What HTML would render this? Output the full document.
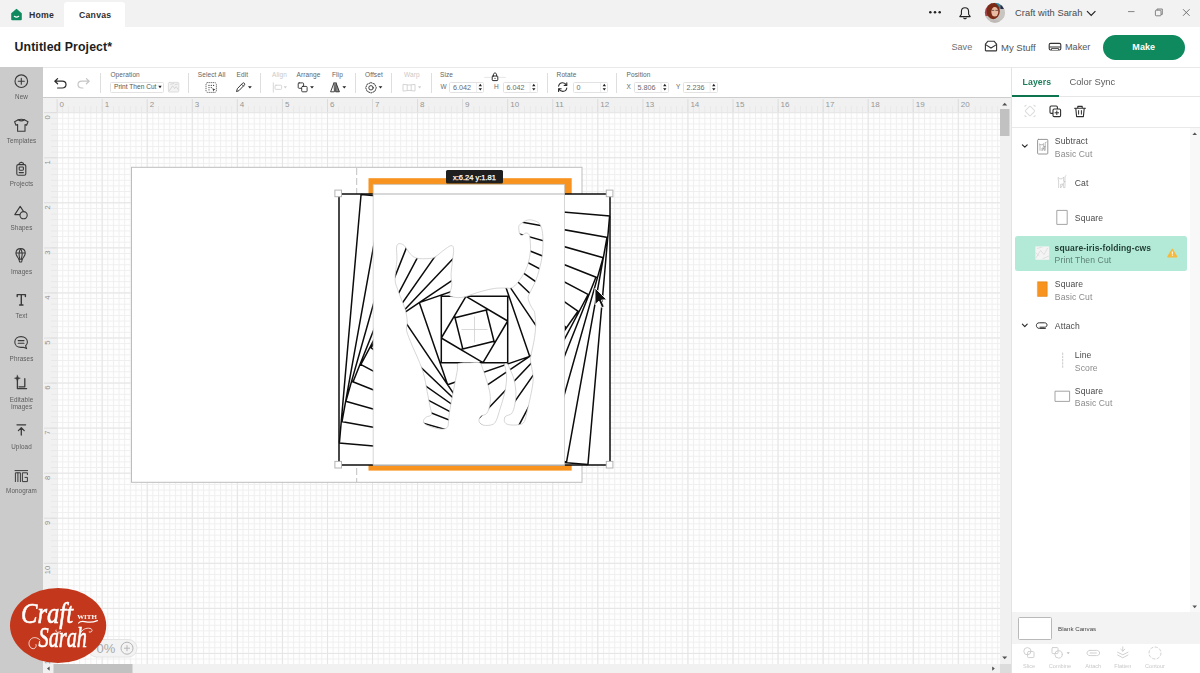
<!DOCTYPE html>
<html lang="en">
<head>
<meta charset="utf-8">
<title>Untitled Project* - Canvas</title>
<style>
*{box-sizing:border-box;margin:0;padding:0}
html,body{width:1200px;height:673px;overflow:hidden;background:#fff;font-family:"Liberation Sans",sans-serif;color:#333}
.abs{position:absolute}
#app{position:relative;width:1200px;height:673px;overflow:hidden;transform:translateZ(0)}
svg{display:block;overflow:visible}
.rl{font-family:"Liberation Sans",sans-serif;font-size:8px;fill:#969696}
/* title bar */
#titlebar{left:0;top:0;width:1200px;height:27px;background:#f2f2f2}
#tab-canvas{left:64px;top:2px;width:61px;height:26px;background:#fff;border-radius:3px 3px 0 0}
.t{position:absolute;white-space:nowrap;line-height:1}
.tabtxt{font-size:8.7px;font-weight:bold;color:#2f2f2f;letter-spacing:0.25px}
/* header */
#header{left:0;top:27px;width:1200px;height:40px;background:#fff}
#ptitle{left:14.5px;top:40.6px;font-size:12.3px;font-weight:bold;color:#1d1d1d;letter-spacing:0.12px}
.hlink{font-size:9.5px;color:#555}
#make{left:1102.5px;top:34.5px;width:82.5px;height:25px;border-radius:12.5px;background:#0f8a5f;color:#fff;font-size:9px;font-weight:bold;text-align:center;line-height:25px;letter-spacing:0.1px}
/* sidebar */
#sidebar{left:0;top:67px;width:43px;height:606px;background:#cbcbcb}
.sbl{position:absolute;left:0;width:43px;text-align:center;font-size:6.3px;color:#5c5c5c;line-height:7px;letter-spacing:0.1px}
/* toolbar */
#toolbar{left:43px;top:67px;width:968px;height:31px;background:#fff;border-top:1px solid #e9e9e9;border-bottom:1px solid #cdcdcd}
.tl{font-size:6.5px;color:#636363;letter-spacing:0.1px}
.tl.dim{color:#c9c9c9}
.sep{position:absolute;top:72.5px;width:1px;height:20.5px;background:#dedede}
.inp{position:absolute;top:82px;height:10.5px;border:1px solid #e2e2e2;border-radius:1.5px;background:#fff}
.iv{font-size:7.2px;color:#6a6a6a}
/* right panel */
#panel{left:1011px;top:67px;width:189px;height:606px;background:#fff}
.ln{font-size:8.6px;color:#4a4a4a;letter-spacing:0.12px;margin-top:0.8px}
.ls{font-size:8.6px;color:#8b8b8b;letter-spacing:0.1px;margin-top:0.8px}
.bl{font-size:5.6px;color:#c9c9c9}
</style>
</head>
<body>
<div id="app">
<!-- TITLEBAR -->
<div id="titlebar" class="abs"></div>
<div id="tab-canvas" class="abs"></div>
<svg class="abs" style="left:10px;top:8px" width="13" height="13" viewBox="0 0 13 13"><path d="M6.5 0.8L11.8 5.2V11.2Q11.8 12.2 10.8 12.2H2.2Q1.2 12.2 1.2 11.2V5.2Z" fill="#0f8a5f"/><path d="M4.3 8.3Q6.5 10 8.7 8.3" stroke="#fff" stroke-width="1.1" fill="none" stroke-linecap="round"/></svg>
<div class="t tabtxt" style="left:29px;top:10.9px">Home</div>
<div class="t tabtxt" style="left:79px;top:10.9px">Canvas</div>
<svg class="abs" style="left:925px;top:0" width="275" height="27" viewBox="925 0 275 27">
<circle cx="930.3" cy="12.3" r="1.25" fill="#222"/><circle cx="935" cy="12.3" r="1.25" fill="#222"/><circle cx="939.7" cy="12.3" r="1.25" fill="#222"/>
<path d="M965 7.7C967.6 7.7 968.6 9.6 968.6 11.6V14.2L970.2 16.6H959.8L961.4 14.2V11.6C961.4 9.6 962.4 7.7 965 7.7Z" fill="none" stroke="#222" stroke-width="1.1" stroke-linejoin="round"/><path d="M963.7 18.2Q965 19.4 966.3 18.2" stroke="#222" stroke-width="1.1" fill="none" stroke-linecap="round"/>
<circle cx="994.9" cy="12.7" r="10" fill="#c6c2be"/>
<clipPath id="avc"><circle cx="994.9" cy="12.7" r="10"/></clipPath>
<g clip-path="url(#avc)"><rect x="984" y="2" width="8" height="14" fill="#a4434c"/><rect x="996" y="2.5" width="4.6" height="6" fill="#2f8fa6"/><rect x="1000.4" y="4.6" width="3.4" height="4.4" fill="#2c2c48"/><rect x="1000" y="9" width="6" height="9" fill="#c9c5c1"/><ellipse cx="993.2" cy="11" rx="6.6" ry="8.2" fill="#7b2c17"/><ellipse cx="994.8" cy="11.8" rx="3.5" ry="4.8" fill="#e9bba3"/><path d="M984 25Q994 15 1006 25V27H984Z" fill="#bdb9b6"/><path d="M991.6 10.4H994.2M995.4 10.4H998" stroke="#5a3a34" stroke-width="0.8"/></g>
<path d="M1087 11.2L1091.2 15.4L1095.4 11.2" fill="none" stroke="#222" stroke-width="1.2"/>
<path d="M1128 11.6H1134.5" stroke="#777" stroke-width="0.9"/>
<rect x="1155.4" y="10.2" width="5.6" height="5.6" rx="0.8" fill="none" stroke="#777" stroke-width="0.9"/><path d="M1157 10.2V9H1162.3V14.4H1161" fill="none" stroke="#777" stroke-width="0.9"/>
<path d="M1183 9.2L1189.6 15.8M1189.6 9.2L1183 15.8" stroke="#666" stroke-width="0.9"/>
</svg>
<div class="t" style="left:1015px;top:8.5px;font-size:9.3px;color:#4a4a4a;letter-spacing:0.05px">Craft with Sarah</div>
<!-- HEADER -->
<div id="header" class="abs"></div>
<div id="ptitle" class="t">Untitled Project*</div>
<div class="t hlink" style="left:951.5px;top:42.7px;font-size:9.1px;color:#6f6f6f">Save</div>
<svg class="abs" style="left:984px;top:40px" width="14" height="12" viewBox="0 0 14 12"><path d="M1.4 4.2L4 1.2H10L12.6 4.2V10.2Q12.6 10.9 11.9 10.9H2.1Q1.4 10.9 1.4 10.2Z" fill="none" stroke="#333" stroke-width="1.1" stroke-linejoin="round"/><path d="M1.6 4.6L7 8L12.4 4.6" fill="none" stroke="#333" stroke-width="1.1"/></svg>
<div class="t hlink" style="left:1001px;top:42.5px">My Stuff</div>
<svg class="abs" style="left:1048px;top:42px" width="14" height="10" viewBox="0 0 14 10"><rect x="1.2" y="1.4" width="11.6" height="6.6" rx="1.4" fill="none" stroke="#333" stroke-width="1.1"/><path d="M1.4 5H12.6" stroke="#333" stroke-width="1"/><path d="M3.4 8V6.6H10.6V8" fill="#fff" stroke="#333" stroke-width="0.9"/></svg>
<div class="t hlink" style="left:1065px;top:42.7px;font-size:9.1px">Maker</div>
<div id="make" class="abs">Make</div>

<!-- SIDEBAR -->
<div id="sidebar" class="abs"></div>
<svg class="abs" style="left:0;top:67px" width="43" height="440" viewBox="0 67 43 440" fill="none" stroke="#3a3a3a" stroke-width="1.1" stroke-linecap="round" stroke-linejoin="round">
<!-- New -->
<circle cx="21.3" cy="81.2" r="6.3"/><path d="M18.3 81.2H24.3M21.3 78.2V84.2"/>
<!-- Templates (shirt) -->
<path d="M18.2 119.8Q21.3 122 24.4 119.8L28 121.8L26.6 125.2L25 124.6V131.2H17.6V124.6L16 125.2L14.6 121.8Z"/><path d="M18.2 119.8Q21.3 118.6 24.4 119.8"/>
<!-- Projects -->
<rect x="16.8" y="164.6" width="9" height="10.6" rx="1.5"/><path d="M19.2 164.4V163.2L21.3 162.2L23.4 163.2V164.4"/><rect x="19.2" y="167" width="4.2" height="3.2" rx="0.6"/><path d="M19.2 172.6H23.4"/>
<!-- Shapes -->
<path d="M20.2 206.4L25.6 214.6H14.8Z"/><circle cx="23.6" cy="215.2" r="3.6" fill="#cbcbcb"/>
<!-- Images (balloon) -->
<path d="M20.6 248.6C23.6 248.6 25.2 250.8 25.2 253.2C25.2 255.8 23 257.4 22.4 259.2H18.8C18.2 257.4 16 255.8 16 253.2C16 250.8 17.6 248.6 20.6 248.6Z"/><path d="M20.6 248.8C19 251 19 256 19.8 259M20.6 248.8C22.2 251 22.2 256 21.4 259M16.2 253H25"/><path d="M19 259.4L19.6 262H21.6L22.2 259.4"/>
<!-- Text -->
<path d="M17.2 296.6V294.6H25.4V296.6M21.3 294.8V304.8M19.6 305H23" stroke-width="1.4"/>
<!-- Phrases -->
<path d="M21 336.6C24.8 336.6 27.4 339 27.4 342C27.4 343.6 26.6 345 25.6 345.8L26.6 348.6L23.4 347.2C22.6 347.4 21.8 347.4 21 347.4C17.2 347.4 14.8 345 14.8 342C14.8 339 17.2 336.6 21 336.6Z"/><path d="M18.2 340.6H24M18.2 343.2H24"/>
<!-- Editable images -->
<path d="M17.4 379.4V388.6H26.6M19 386.8H24.8V378.6" stroke-width="1.3"/><path d="M17.4 375.2L18.3 377.4L20.4 378.2L18.3 379L17.4 381.2L16.5 379L14.4 378.2L16.5 377.4Z" fill="#3a3a3a" stroke-width="0.4"/>
<!-- Upload -->
<path d="M17 424.8H25.6" stroke-width="1.3"/><path d="M21.3 435V428M18.4 430.6L21.3 427.6L24.2 430.6" stroke-width="1.3"/>
<!-- Monogram -->
<path d="M15 470.6H27.6" stroke-width="1"/><path d="M15.4 481.6V472.8H20.4V481.6M17.9 472.8V481.6" stroke-width="1"/><path d="M27.4 474.6V472.8H22.4V481.6H27.4V477.4H25" stroke-width="1"/>
</svg>
<div class="sbl" style="top:92.8px">New</div>
<div class="sbl" style="top:136.5px">Templates</div>
<div class="sbl" style="top:180.2px">Projects</div>
<div class="sbl" style="top:224.2px">Shapes</div>
<div class="sbl" style="top:267.8px">Images</div>
<div class="sbl" style="top:311.5px">Text</div>
<div class="sbl" style="top:354.8px">Phrases</div>
<div class="sbl" style="top:396.2px">Editable<br>Images</div>
<div class="sbl" style="top:442.8px;line-height:7px">Upload</div>
<div class="sbl" style="top:486.8px">Monogram</div>

<!-- TOOLBAR -->
<div id="toolbar" class="abs"></div>
<svg class="abs" style="left:43px;top:68px" width="968" height="29" viewBox="43 68 968 29" fill="none" stroke-linecap="round" stroke-linejoin="round">
<!-- undo / redo -->
<path d="M57.6 78.6L54.8 81.2L57.6 83.8M55 81.2H62.2C64.6 81.2 66 82.8 66 84.6C66 86.4 64.6 88 62.2 88H57.6" stroke="#2b2b2b" stroke-width="1.2"/>
<path d="M86.4 78.6L89.2 81.2L86.4 83.8M89 81.2H81.8C79.4 81.2 78 82.8 78 84.6C78 86.4 79.4 88 81.8 88H83" stroke="#c6c6c6" stroke-width="1.2"/>
<!-- op swatch -->
<rect x="168.4" y="82.4" width="10.4" height="9.6" rx="1" stroke="#d5d5d5" stroke-width="0.8" fill="#f3f3f3"/><path d="M169.4 90.6L172.6 85.8L174.6 88.6L176.2 86.6L178 89.4M170.6 84.2L173.8 83.6M175 84.8L177.6 84" stroke="#cfcfcf" stroke-width="0.8"/>
<!-- select all -->
<rect x="206" y="82.6" width="10.4" height="9.8" rx="1.8" stroke="#3a3a3a" stroke-width="0.95" stroke-dasharray="0.2 1.75" stroke-linecap="round"/><g fill="#3a3a3a" stroke="none"><circle cx="209" cy="85.4" r="0.6"/><circle cx="211.3" cy="85.4" r="0.6"/><circle cx="213.6" cy="85.4" r="0.6"/><circle cx="209" cy="87.6" r="0.6"/><circle cx="211.3" cy="87.6" r="0.6"/><circle cx="209" cy="89.8" r="0.6"/><path d="M212.4 88.2L215.4 89.6L213.9 90.2L213.4 91.8Z"/></g>
<!-- edit pencil -->
<path d="M236.6 91.2L237.4 88.6L242.6 83.2Q243.5 82.4 244.4 83.3Q245.2 84.2 244.4 85L239.2 90.4Z" stroke="#2b2b2b" stroke-width="0.95"/><path d="M241.6 84.3L243.4 86.1" stroke="#2b2b2b" stroke-width="0.8"/><path d="M248 86.2H251.8L249.9 88.6Z" fill="#222" stroke="none"/>
<!-- align (disabled) -->
<path d="M273.3 82.8V92.2" stroke="#d2d2d2" stroke-width="0.9"/><rect x="275" y="85.2" width="6.6" height="4.2" rx="0.9" stroke="#d2d2d2" stroke-width="0.9"/><path d="M283.6 86.2H287L285.3 88.4Z" fill="#d0d0d0" stroke="none"/>
<!-- arrange -->
<rect x="298.2" y="82.9" width="5.4" height="5.4" rx="0.9" stroke="#2b2b2b" stroke-width="0.9"/><rect x="301.7" y="86.4" width="5.4" height="5.4" rx="0.9" stroke="#2b2b2b" stroke-width="0.9" fill="#fff"/><path d="M310.1 86.2H313.9L312 88.6Z" fill="#222" stroke="none"/>
<!-- flip -->
<path d="M334 82.8L330.6 91.8H334Z" stroke="#2b2b2b" stroke-width="0.9"/><path d="M336 82.8L339.4 91.8H336Z" stroke="#2b2b2b" stroke-width="0.9" fill="#8a8a8a"/><path d="M342.4 86.2H346.2L344.3 88.6Z" fill="#222" stroke="none"/>
<!-- offset -->
<circle cx="371" cy="87.8" r="2.2" stroke="#2b2b2b" stroke-width="0.9"/><path d="M371 82.6L374.8 84.2L376.3 87.8L374.8 91.4L371 93L367.2 91.4L365.7 87.8L367.2 84.2Z" stroke="#2b2b2b" stroke-width="0.9" stroke-dasharray="1.3 1.2"/><path d="M378.6 86.2H382.4L380.5 88.6Z" fill="#222" stroke="none"/>
<!-- warp (disabled) -->
<path d="M403.4 84.4Q409.2 85.8 415 84.4V91Q409.2 89.8 403.4 91ZM407.2 85V90.2M411.2 85V90.2" stroke="#cfcfcf" stroke-width="0.9"/><path d="M417.9 86.2H421.3L419.6 88.4Z" fill="#d0d0d0" stroke="none"/>
<!-- lock -->
<path d="M484.6 77.4H490.4M499.4 77.4H505.4" stroke="#e0e0e0" stroke-width="0.8"/>
<rect x="492.2" y="76" width="5.6" height="4.6" rx="0.8" stroke="#2b2b2b" stroke-width="1" fill="#fff"/><path d="M493.4 76V74.8C493.4 73.6 494.2 73 495 73C495.8 73 496.6 73.6 496.6 74.8V76" stroke="#2b2b2b" stroke-width="1"/><circle cx="495" cy="78.3" r="0.6" fill="#2b2b2b" stroke="none"/>
<!-- rotate icon -->
<path d="M558.6 86.2C559 84 560.6 82.8 562.6 82.8C564.4 82.8 565.8 83.8 566.4 85.2M566.8 88C566.4 90.2 564.8 91.4 562.8 91.4C561 91.4 559.6 90.4 559 89" stroke="#2b2b2b" stroke-width="1.1"/><path d="M566.8 82.8V85.4H564.2M558.6 91.4V88.8H561.2" stroke="#2b2b2b" stroke-width="1.1"/>
</svg>
<div class="sep" style="left:100px"></div><div class="sep" style="left:188px"></div><div class="sep" style="left:260.4px"></div><div class="sep" style="left:355px"></div><div class="sep" style="left:391px"></div><div class="sep" style="left:430.5px"></div><div class="sep" style="left:546.5px"></div><div class="sep" style="left:616px"></div>
<div class="t tl" style="left:110.4px;top:72.2px">Operation</div>
<div class="inp" style="left:110.4px;width:53.6px"></div>
<div class="t" style="left:114px;top:84px;font-size:6.6px;color:#555">Print Then Cut</div>
<svg class="abs" style="left:157.6px;top:85.4px" width="4" height="4" viewBox="0 0 4 4"><path d="M0.3 0.8H3.7L2 3.2Z" fill="#222"/></svg>
<div class="t tl" style="left:197.8px;top:72.2px">Select All</div>
<div class="t tl" style="left:236.6px;top:72.2px">Edit</div>
<div class="t tl dim" style="left:272px;top:72.2px">Align</div>
<div class="t tl" style="left:296.6px;top:72.2px">Arrange</div>
<div class="t tl" style="left:332px;top:72.2px">Flip</div>
<div class="t tl" style="left:365px;top:72.2px">Offset</div>
<div class="t tl dim" style="left:404px;top:72.2px">Warp</div>
<div class="t tl" style="left:440px;top:72.2px">Size</div>
<div class="t tl" style="left:440.6px;top:84px;color:#6a6a6a">W</div>
<div class="inp" style="left:449px;width:35px"></div><div class="t iv" style="left:453px;top:83.8px">6.042</div>
<div class="t tl" style="left:494px;top:84px;color:#6a6a6a">H</div>
<div class="inp" style="left:502.5px;width:35px"></div><div class="t iv" style="left:506.5px;top:83.8px">6.042</div>
<div class="t tl" style="left:556.6px;top:72.2px">Rotate</div>
<div class="inp" style="left:573px;width:35px"></div><div class="t iv" style="left:576.4px;top:83.8px">0</div>
<div class="t tl" style="left:626.6px;top:72.2px">Position</div>
<div class="t tl" style="left:626.6px;top:84px;color:#6a6a6a">X</div>
<div class="inp" style="left:633.5px;width:35px"></div><div class="t iv" style="left:637.6px;top:83.8px">5.806</div>
<div class="t tl" style="left:676px;top:84px;color:#6a6a6a">Y</div>
<div class="inp" style="left:682.5px;width:35px"></div><div class="t iv" style="left:686.6px;top:83.8px">2.236</div>
<svg class="abs" style="left:43px;top:68px" width="968" height="29" viewBox="43 68 968 29">
<g fill="#222">
<path id="spn" d="M478.6 86.2H482L480.3 83.8ZM478.6 88.2H482L480.3 90.6Z"/>
<path d="M478.6 86.2H482L480.3 83.8ZM478.6 88.2H482L480.3 90.6Z" transform="translate(53.5 0)"/>
<path d="M478.6 86.2H482L480.3 83.8ZM478.6 88.2H482L480.3 90.6Z" transform="translate(124 0)"/>
<path d="M478.6 86.2H482L480.3 83.8ZM478.6 88.2H482L480.3 90.6Z" transform="translate(184.5 0)"/>
<path d="M478.6 86.2H482L480.3 83.8ZM478.6 88.2H482L480.3 90.6Z" transform="translate(233.5 0)"/>
</g>
<g stroke="#e2e2e2" stroke-width="0.7"><path d="M476.6 82.6V92M530.1 82.6V92M600.6 82.6V92M661.1 82.6V92M710.1 82.6V92"/></g>
</svg>

<svg id="csvg" class="abs" style="left:0;top:0" width="1200" height="673" viewBox="0 0 1200 673">
<defs>
<pattern id="gmin" x="56.60" y="112.20" width="5.6325" height="5.6325" patternUnits="userSpaceOnUse">
<path d="M0.5 0V5.633 M0 0.5H5.633" stroke="#efefef" stroke-width="1" fill="none"/></pattern>
<pattern id="gmaj" x="56.60" y="112.20" width="45.060" height="45.060" patternUnits="userSpaceOnUse">
<path d="M0.5 0V45.060 M0 0.5H45.060" stroke="#e5e5e5" stroke-width="1" fill="none"/></pattern>
<pattern id="gq" x="56.60" y="112.20" width="11.2650" height="11.2650" patternUnits="userSpaceOnUse">
<path d="M0.5 0V11.265 M0 0.5H11.265" stroke="#eeeeee" stroke-width="1" fill="none"/></pattern>
<pattern id="rtick" x="56.60" y="0" width="5.6325" height="6" patternUnits="userSpaceOnUse"><path d="M0.5 0V6" stroke="#e8e8e8" stroke-width="1"/></pattern>
<pattern id="ltick" x="0" y="112.20" width="6" height="5.6325" patternUnits="userSpaceOnUse"><path d="M0 0.5H6" stroke="#e8e8e8" stroke-width="1"/></pattern>
<clipPath id="cv"><rect x="43" y="98" width="957" height="566"/></clipPath>
<clipPath id="catclip"><path d="M399.1 243.7C397.8 243.9 397.0 244.4 396.6 247.1C396.2 249.8 397.1 254.4 396.9 259.7C396.6 265.0 395.0 274.1 395.1 279.0C395.2 283.9 396.3 285.4 397.6 289.4C398.9 293.4 401.4 299.1 402.8 302.8C404.2 306.5 405.1 308.5 405.8 311.7C406.6 314.9 407.2 318.8 407.3 322.0C407.4 325.2 405.8 326.9 406.6 330.7C407.4 334.5 410.0 340.2 411.9 345.0C413.8 349.8 416.3 354.4 418.2 359.2C420.1 363.9 422.0 368.1 423.5 373.5C425.0 378.9 426.1 386.0 427.1 391.3C428.2 396.6 429.1 401.6 429.8 405.5C430.5 409.4 432.1 412.6 431.5 414.5C430.9 416.4 427.5 416.1 426.2 417.1C424.9 418.1 423.6 419.5 423.5 420.7C423.4 421.9 423.5 423.1 425.3 424.3C427.1 425.5 431.2 427.0 434.2 427.8C437.2 428.6 440.9 429.2 443.1 429.1C445.3 429.0 446.7 428.1 447.6 426.9C448.5 425.6 448.2 424.0 448.5 421.6C448.8 419.2 448.8 416.6 449.4 412.7C450.0 408.8 451.1 403.1 452.0 398.4C452.9 393.6 453.8 388.9 454.7 384.2C455.6 379.4 456.8 373.3 457.4 369.9C458.0 366.5 456.2 364.9 458.3 363.7C460.4 362.5 466.3 362.9 469.9 362.8C473.4 362.7 477.5 361.8 479.6 362.8C481.7 363.8 481.5 365.6 482.7 368.6C483.9 371.7 485.6 376.9 486.8 381.1C488.0 385.3 489.5 389.8 490.0 393.6C490.5 397.4 490.5 400.7 490.0 404.0C489.5 407.3 488.4 411.2 486.8 413.3C485.2 415.4 481.9 415.0 480.6 416.4C479.3 417.8 478.6 420.1 479.1 421.6C479.6 423.1 481.6 424.7 483.7 425.2C485.8 425.7 489.9 425.5 492.0 424.7C494.1 423.9 494.8 423.4 496.2 420.6C497.6 417.8 498.9 412.6 500.3 408.1C501.7 403.6 503.4 398.5 504.5 393.6C505.6 388.8 506.4 383.2 506.6 379.0C506.8 374.8 505.9 371.0 505.5 368.6C505.1 366.2 504.1 365.2 504.5 364.4C504.9 363.6 506.7 363.3 507.6 364.0C508.5 364.7 508.6 366.1 509.7 368.6C510.8 371.1 512.9 375.2 513.9 379.0C514.9 382.8 515.7 387.3 515.9 391.5C516.1 395.7 515.6 400.4 514.9 404.0C514.2 407.6 513.4 411.2 511.8 413.3C510.2 415.4 506.7 415.0 505.5 416.4C504.3 417.8 504.0 420.2 504.5 421.6C505.0 423.0 506.3 424.2 508.7 424.7C511.1 425.2 516.5 425.2 519.1 424.7C521.7 424.2 522.9 424.0 524.3 421.6C525.7 419.2 526.3 414.9 527.4 410.2C528.5 405.5 530.1 398.8 531.1 393.6C532.1 388.4 533.1 383.5 533.2 379.0C533.3 374.5 532.0 370.0 531.5 366.5C531.0 363.0 530.3 361.3 530.5 358.2C530.7 355.1 531.9 351.3 532.6 347.8C533.3 344.3 534.1 341.2 534.6 337.4C535.1 333.6 535.7 329.1 535.7 325.0C535.7 320.9 535.0 315.0 534.6 312.5C534.2 310.0 534.0 311.2 533.3 310.0C532.6 308.8 531.3 307.1 530.4 305.0C529.5 302.9 528.1 299.8 528.1 297.6C528.1 295.4 529.2 294.4 530.4 291.7C531.6 289.0 534.0 285.0 535.5 281.3C537.0 277.6 538.2 273.6 539.3 269.4C540.4 265.2 541.6 260.4 542.2 256.0C542.8 251.6 543.0 246.9 543.0 242.7C543.0 238.5 542.8 234.0 542.2 230.8C541.6 227.6 540.8 225.1 539.3 223.4C537.8 221.7 535.3 221.0 533.3 220.4C531.3 219.8 529.4 219.6 527.4 220.1C525.4 220.6 522.8 222.4 521.4 223.4C520.0 224.4 519.1 224.6 518.8 226.3C518.5 228.0 519.1 232.3 519.7 233.8C520.3 235.3 521.2 235.3 522.2 235.2C523.2 235.1 524.8 233.1 525.9 233.0C527.0 232.9 528.2 233.4 528.9 234.5C529.6 235.6 529.9 236.8 530.1 239.7C530.4 242.5 530.7 247.6 530.4 251.6C530.1 255.6 529.2 259.8 528.1 263.5C527.0 267.2 525.7 270.4 523.7 273.9C521.7 277.4 518.3 281.9 516.2 284.3C514.1 286.7 512.9 287.4 511.0 288.0C509.1 288.6 507.8 287.9 505.1 288.0C502.4 288.1 498.4 287.9 494.7 288.4C491.0 288.9 486.8 289.9 482.8 291.0C478.9 292.1 473.9 293.7 471.0 294.7C468.1 295.7 467.4 296.3 465.2 296.8C463.0 297.3 460.3 297.7 457.8 297.6C455.3 297.5 451.6 296.9 450.3 296.1C449.0 295.4 449.8 295.0 450.0 293.1C450.2 291.2 451.6 288.1 451.8 285.0C452.0 281.9 451.0 278.8 451.1 274.6C451.2 270.4 452.2 263.9 452.6 259.7C453.0 255.5 453.9 251.7 453.6 249.3C453.4 247.0 452.9 245.3 451.1 245.6C449.3 245.8 445.5 249.0 442.9 250.8C440.3 252.7 437.7 255.4 435.5 256.7C433.3 258.0 432.7 258.2 429.6 258.5C426.5 258.8 420.1 259.0 416.9 258.2C413.7 257.4 412.3 255.9 410.2 253.8C408.1 251.7 406.1 247.3 404.3 245.6C402.5 243.9 400.4 243.4 399.1 243.7Z"/></clipPath>
</defs>
<g clip-path="url(#cv)">
<rect x="43" y="98" width="957" height="566" fill="#fefefe"/>
<rect x="57" y="112" width="943" height="552" fill="url(#gmin)"/>
<rect x="57" y="112" width="943" height="552" fill="url(#gmaj)"/>
<!-- rulers -->
<rect x="43" y="98" width="957" height="14" fill="#f1f1f1"/>
<rect x="43" y="98" width="14" height="566" fill="#f1f1f1"/>
<rect x="57" y="106" width="943" height="6" fill="url(#rtick)"/>
<rect x="51" y="112" width="6" height="552" fill="url(#ltick)"/>
<line x1="57.1" y1="99" x2="57.1" y2="112" stroke="#dcdcdc" stroke-width="1"/>
<text x="59.6" y="107" class="rl">0</text>
<line x1="102.2" y1="99" x2="102.2" y2="112" stroke="#dcdcdc" stroke-width="1"/>
<text x="104.7" y="107" class="rl">1</text>
<line x1="147.2" y1="99" x2="147.2" y2="112" stroke="#dcdcdc" stroke-width="1"/>
<text x="149.7" y="107" class="rl">2</text>
<line x1="192.3" y1="99" x2="192.3" y2="112" stroke="#dcdcdc" stroke-width="1"/>
<text x="194.8" y="107" class="rl">3</text>
<line x1="237.3" y1="99" x2="237.3" y2="112" stroke="#dcdcdc" stroke-width="1"/>
<text x="239.8" y="107" class="rl">4</text>
<line x1="282.4" y1="99" x2="282.4" y2="112" stroke="#dcdcdc" stroke-width="1"/>
<text x="284.9" y="107" class="rl">5</text>
<line x1="327.5" y1="99" x2="327.5" y2="112" stroke="#dcdcdc" stroke-width="1"/>
<text x="330.0" y="107" class="rl">6</text>
<line x1="372.5" y1="99" x2="372.5" y2="112" stroke="#dcdcdc" stroke-width="1"/>
<text x="375.0" y="107" class="rl">7</text>
<line x1="417.6" y1="99" x2="417.6" y2="112" stroke="#dcdcdc" stroke-width="1"/>
<text x="420.1" y="107" class="rl">8</text>
<line x1="462.6" y1="99" x2="462.6" y2="112" stroke="#dcdcdc" stroke-width="1"/>
<text x="465.1" y="107" class="rl">9</text>
<line x1="507.7" y1="99" x2="507.7" y2="112" stroke="#dcdcdc" stroke-width="1"/>
<text x="510.2" y="107" class="rl">10</text>
<line x1="552.8" y1="99" x2="552.8" y2="112" stroke="#dcdcdc" stroke-width="1"/>
<text x="555.3" y="107" class="rl">11</text>
<line x1="597.8" y1="99" x2="597.8" y2="112" stroke="#dcdcdc" stroke-width="1"/>
<text x="600.3" y="107" class="rl">12</text>
<line x1="642.9" y1="99" x2="642.9" y2="112" stroke="#dcdcdc" stroke-width="1"/>
<text x="645.4" y="107" class="rl">13</text>
<line x1="687.9" y1="99" x2="687.9" y2="112" stroke="#dcdcdc" stroke-width="1"/>
<text x="690.4" y="107" class="rl">14</text>
<line x1="733.0" y1="99" x2="733.0" y2="112" stroke="#dcdcdc" stroke-width="1"/>
<text x="735.5" y="107" class="rl">15</text>
<line x1="778.1" y1="99" x2="778.1" y2="112" stroke="#dcdcdc" stroke-width="1"/>
<text x="780.6" y="107" class="rl">16</text>
<line x1="823.1" y1="99" x2="823.1" y2="112" stroke="#dcdcdc" stroke-width="1"/>
<text x="825.6" y="107" class="rl">17</text>
<line x1="868.2" y1="99" x2="868.2" y2="112" stroke="#dcdcdc" stroke-width="1"/>
<text x="870.7" y="107" class="rl">18</text>
<line x1="913.2" y1="99" x2="913.2" y2="112" stroke="#dcdcdc" stroke-width="1"/>
<text x="915.7" y="107" class="rl">19</text>
<line x1="958.3" y1="99" x2="958.3" y2="112" stroke="#dcdcdc" stroke-width="1"/>
<text x="960.8" y="107" class="rl">20</text>
<line x1="44" y1="112.7" x2="57" y2="112.7" stroke="#dcdcdc" stroke-width="1"/>
<text transform="translate(50.4 115.2) rotate(-90)" class="rl" style="font-size:7.6px;fill:#8f8f8f" text-anchor="end">0</text>
<line x1="44" y1="157.8" x2="57" y2="157.8" stroke="#dcdcdc" stroke-width="1"/>
<text transform="translate(50.4 160.3) rotate(-90)" class="rl" style="font-size:7.6px;fill:#8f8f8f" text-anchor="end">1</text>
<line x1="44" y1="202.8" x2="57" y2="202.8" stroke="#dcdcdc" stroke-width="1"/>
<text transform="translate(50.4 205.3) rotate(-90)" class="rl" style="font-size:7.6px;fill:#8f8f8f" text-anchor="end">2</text>
<line x1="44" y1="247.9" x2="57" y2="247.9" stroke="#dcdcdc" stroke-width="1"/>
<text transform="translate(50.4 250.4) rotate(-90)" class="rl" style="font-size:7.6px;fill:#8f8f8f" text-anchor="end">3</text>
<line x1="44" y1="292.9" x2="57" y2="292.9" stroke="#dcdcdc" stroke-width="1"/>
<text transform="translate(50.4 295.4) rotate(-90)" class="rl" style="font-size:7.6px;fill:#8f8f8f" text-anchor="end">4</text>
<line x1="44" y1="338.0" x2="57" y2="338.0" stroke="#dcdcdc" stroke-width="1"/>
<text transform="translate(50.4 340.5) rotate(-90)" class="rl" style="font-size:7.6px;fill:#8f8f8f" text-anchor="end">5</text>
<line x1="44" y1="383.1" x2="57" y2="383.1" stroke="#dcdcdc" stroke-width="1"/>
<text transform="translate(50.4 385.6) rotate(-90)" class="rl" style="font-size:7.6px;fill:#8f8f8f" text-anchor="end">6</text>
<line x1="44" y1="428.1" x2="57" y2="428.1" stroke="#dcdcdc" stroke-width="1"/>
<text transform="translate(50.4 430.6) rotate(-90)" class="rl" style="font-size:7.6px;fill:#8f8f8f" text-anchor="end">7</text>
<line x1="44" y1="473.2" x2="57" y2="473.2" stroke="#dcdcdc" stroke-width="1"/>
<text transform="translate(50.4 475.7) rotate(-90)" class="rl" style="font-size:7.6px;fill:#8f8f8f" text-anchor="end">8</text>
<line x1="44" y1="518.2" x2="57" y2="518.2" stroke="#dcdcdc" stroke-width="1"/>
<text transform="translate(50.4 520.7) rotate(-90)" class="rl" style="font-size:7.6px;fill:#8f8f8f" text-anchor="end">9</text>
<line x1="44" y1="563.3" x2="57" y2="563.3" stroke="#dcdcdc" stroke-width="1"/>
<text transform="translate(50.4 565.8) rotate(-90)" class="rl" style="font-size:7.6px;fill:#8f8f8f" text-anchor="end">10</text>
<line x1="44" y1="608.4" x2="57" y2="608.4" stroke="#dcdcdc" stroke-width="1"/>
<text transform="translate(50.4 610.9) rotate(-90)" class="rl" style="font-size:7.6px;fill:#8f8f8f" text-anchor="end">11</text>
<line x1="44" y1="653.4" x2="57" y2="653.4" stroke="#dcdcdc" stroke-width="1"/>
<text transform="translate(50.4 655.9) rotate(-90)" class="rl" style="font-size:7.6px;fill:#8f8f8f" text-anchor="end">12</text>
<!-- mat / card -->
<rect x="131.5" y="167.3" width="450.5" height="315" fill="#fff" stroke="#bdbdbd" stroke-width="1"/>
<line x1="356.7" y1="168" x2="356.7" y2="482" stroke="#b0b0b0" stroke-width="0.8" stroke-dasharray="7 3"/>
<!-- orange square -->
<rect x="368.5" y="178.2" width="203.2" height="292.4" fill="#f7931e"/>
<!-- iris folding print -->
<rect x="339" y="194" width="271" height="271" fill="#fff"/>
<g fill="none" stroke="#0c0c0c" stroke-width="1.5" stroke-linejoin="miter">
<polygon points="339.0,194.0 610.0,194.0 610.0,465.0 339.0,465.0"/>
<path d="M361.1 194.4L610.0 216.1M609.6 216.1L587.9 465.0M587.9 464.6L339.0 442.9M339.4 442.9L361.1 194.0M382.4 197.0L607.8 237.6M607.0 237.4L566.4 462.8M566.6 462.0L341.2 421.4M342.0 421.6L382.6 196.2M402.6 200.9L603.3 257.7M603.1 257.6L546.3 458.3M546.4 458.1L345.7 401.3M345.9 401.4L402.7 200.7M422.2 208.1L597.4 277.8M595.9 277.2L526.2 452.4M526.8 450.9L351.6 381.2M353.1 381.8L422.8 206.6M439.5 215.9L588.9 294.9M588.1 294.5L509.1 443.9M509.5 443.1L360.1 364.1M360.9 364.5L439.9 215.1M456.2 226.0L578.9 311.9M578.0 311.2L492.1 433.9M492.8 433.0L370.1 347.1M371.0 347.8L456.9 225.1M472.1 238.5L566.3 327.9M565.5 327.1L476.1 421.3M476.9 420.5L382.7 331.1M383.5 331.9L472.9 237.7M488.8 255.7L548.8 344.6M548.3 343.8L459.4 403.8M460.2 403.3L400.2 314.4M400.7 315.2L489.6 255.2M501.4 274.3L529.7 356.4M529.7 356.4L447.6 384.7M447.6 384.7L419.3 302.6M419.3 302.6L501.4 274.3M507.7 296.3L507.7 364.0M507.7 362.7L440.0 362.7M441.3 362.7L441.3 295.0M441.3 296.3L509.0 296.3M507.7 321.0L483.0 362.7M483.0 362.7L441.3 338.0M441.3 338.0L466.0 296.3M466.0 296.3L507.7 321.0M494.0 341.2L460.7 349.5M462.8 349.0L454.5 315.7M455.0 317.8L488.3 309.5M486.2 310.0L494.5 343.3"/>
</g>
<path d="M461.5 329.5H487.5M474.5 316.5V342.5" stroke="#cfcfcf" stroke-width="0.8" fill="none"/>
<!-- subtract layer (white with cat hole) -->
<path fill-rule="evenodd" fill="#fff" stroke="#c4c4c4" stroke-width="0.7" d="M373.2 184.4H564.5V465.4H373.2Z M399.1 243.7C397.8 243.9 397.0 244.4 396.6 247.1C396.2 249.8 397.1 254.4 396.9 259.7C396.6 265.0 395.0 274.1 395.1 279.0C395.2 283.9 396.3 285.4 397.6 289.4C398.9 293.4 401.4 299.1 402.8 302.8C404.2 306.5 405.1 308.5 405.8 311.7C406.6 314.9 407.2 318.8 407.3 322.0C407.4 325.2 405.8 326.9 406.6 330.7C407.4 334.5 410.0 340.2 411.9 345.0C413.8 349.8 416.3 354.4 418.2 359.2C420.1 363.9 422.0 368.1 423.5 373.5C425.0 378.9 426.1 386.0 427.1 391.3C428.2 396.6 429.1 401.6 429.8 405.5C430.5 409.4 432.1 412.6 431.5 414.5C430.9 416.4 427.5 416.1 426.2 417.1C424.9 418.1 423.6 419.5 423.5 420.7C423.4 421.9 423.5 423.1 425.3 424.3C427.1 425.5 431.2 427.0 434.2 427.8C437.2 428.6 440.9 429.2 443.1 429.1C445.3 429.0 446.7 428.1 447.6 426.9C448.5 425.6 448.2 424.0 448.5 421.6C448.8 419.2 448.8 416.6 449.4 412.7C450.0 408.8 451.1 403.1 452.0 398.4C452.9 393.6 453.8 388.9 454.7 384.2C455.6 379.4 456.8 373.3 457.4 369.9C458.0 366.5 456.2 364.9 458.3 363.7C460.4 362.5 466.3 362.9 469.9 362.8C473.4 362.7 477.5 361.8 479.6 362.8C481.7 363.8 481.5 365.6 482.7 368.6C483.9 371.7 485.6 376.9 486.8 381.1C488.0 385.3 489.5 389.8 490.0 393.6C490.5 397.4 490.5 400.7 490.0 404.0C489.5 407.3 488.4 411.2 486.8 413.3C485.2 415.4 481.9 415.0 480.6 416.4C479.3 417.8 478.6 420.1 479.1 421.6C479.6 423.1 481.6 424.7 483.7 425.2C485.8 425.7 489.9 425.5 492.0 424.7C494.1 423.9 494.8 423.4 496.2 420.6C497.6 417.8 498.9 412.6 500.3 408.1C501.7 403.6 503.4 398.5 504.5 393.6C505.6 388.8 506.4 383.2 506.6 379.0C506.8 374.8 505.9 371.0 505.5 368.6C505.1 366.2 504.1 365.2 504.5 364.4C504.9 363.6 506.7 363.3 507.6 364.0C508.5 364.7 508.6 366.1 509.7 368.6C510.8 371.1 512.9 375.2 513.9 379.0C514.9 382.8 515.7 387.3 515.9 391.5C516.1 395.7 515.6 400.4 514.9 404.0C514.2 407.6 513.4 411.2 511.8 413.3C510.2 415.4 506.7 415.0 505.5 416.4C504.3 417.8 504.0 420.2 504.5 421.6C505.0 423.0 506.3 424.2 508.7 424.7C511.1 425.2 516.5 425.2 519.1 424.7C521.7 424.2 522.9 424.0 524.3 421.6C525.7 419.2 526.3 414.9 527.4 410.2C528.5 405.5 530.1 398.8 531.1 393.6C532.1 388.4 533.1 383.5 533.2 379.0C533.3 374.5 532.0 370.0 531.5 366.5C531.0 363.0 530.3 361.3 530.5 358.2C530.7 355.1 531.9 351.3 532.6 347.8C533.3 344.3 534.1 341.2 534.6 337.4C535.1 333.6 535.7 329.1 535.7 325.0C535.7 320.9 535.0 315.0 534.6 312.5C534.2 310.0 534.0 311.2 533.3 310.0C532.6 308.8 531.3 307.1 530.4 305.0C529.5 302.9 528.1 299.8 528.1 297.6C528.1 295.4 529.2 294.4 530.4 291.7C531.6 289.0 534.0 285.0 535.5 281.3C537.0 277.6 538.2 273.6 539.3 269.4C540.4 265.2 541.6 260.4 542.2 256.0C542.8 251.6 543.0 246.9 543.0 242.7C543.0 238.5 542.8 234.0 542.2 230.8C541.6 227.6 540.8 225.1 539.3 223.4C537.8 221.7 535.3 221.0 533.3 220.4C531.3 219.8 529.4 219.6 527.4 220.1C525.4 220.6 522.8 222.4 521.4 223.4C520.0 224.4 519.1 224.6 518.8 226.3C518.5 228.0 519.1 232.3 519.7 233.8C520.3 235.3 521.2 235.3 522.2 235.2C523.2 235.1 524.8 233.1 525.9 233.0C527.0 232.9 528.2 233.4 528.9 234.5C529.6 235.6 529.9 236.8 530.1 239.7C530.4 242.5 530.7 247.6 530.4 251.6C530.1 255.6 529.2 259.8 528.1 263.5C527.0 267.2 525.7 270.4 523.7 273.9C521.7 277.4 518.3 281.9 516.2 284.3C514.1 286.7 512.9 287.4 511.0 288.0C509.1 288.6 507.8 287.9 505.1 288.0C502.4 288.1 498.4 287.9 494.7 288.4C491.0 288.9 486.8 289.9 482.8 291.0C478.9 292.1 473.9 293.7 471.0 294.7C468.1 295.7 467.4 296.3 465.2 296.8C463.0 297.3 460.3 297.7 457.8 297.6C455.3 297.5 451.6 296.9 450.3 296.1C449.0 295.4 449.8 295.0 450.0 293.1C450.2 291.2 451.6 288.1 451.8 285.0C452.0 281.9 451.0 278.8 451.1 274.6C451.2 270.4 452.2 263.9 452.6 259.7C453.0 255.5 453.9 251.7 453.6 249.3C453.4 247.0 452.9 245.3 451.1 245.6C449.3 245.8 445.5 249.0 442.9 250.8C440.3 252.7 437.7 255.4 435.5 256.7C433.3 258.0 432.7 258.2 429.6 258.5C426.5 258.8 420.1 259.0 416.9 258.2C413.7 257.4 412.3 255.9 410.2 253.8C408.1 251.7 406.1 247.3 404.3 245.6C402.5 243.9 400.4 243.4 399.1 243.7Z"/>
<!-- selection box -->
<path d="M373.2 194H564.5M373.2 465H564.5" fill="none" stroke="#a8a8a8" stroke-width="0.9"/>
<g fill="#fff" stroke="#b4b4b4" stroke-width="1">
<rect x="334.9" y="190.1" width="6.6" height="6.6"/><rect x="606.3" y="190.1" width="6.6" height="6.6"/>
<rect x="334.9" y="461.4" width="6.6" height="6.6"/><rect x="606.3" y="461.4" width="6.6" height="6.6"/>
</g>
<!-- tooltip -->
<rect x="446" y="170" width="57" height="13.5" rx="1.5" fill="#1f1f1f"/>
<text x="474.5" y="179.6" text-anchor="middle" font-size="7.5" fill="#fff" stroke="#fff" stroke-width="0.25" font-family="Liberation Sans, sans-serif">x:6.24 y:1.81</text>
<!-- cursor -->
<path transform="translate(0.5 2.5)" d="M594.5 285.5L594.5 302.2L598.4 298.6L601.3 305.2L603.8 304.1L600.9 297.6L606.3 297.3Z" fill="#111" stroke="#fff" stroke-width="0.9" stroke-linejoin="round"/>
<!-- zoom pill -->
<rect x="88" y="639.5" width="49" height="17.5" rx="8.7" fill="#f3f3f3" stroke="#e4e4e4" stroke-width="1"/>
<text x="96.5" y="653" font-size="13" fill="#a9a9a9" font-family="Liberation Sans, sans-serif">0%</text>
<circle cx="127" cy="648.2" r="6" fill="none" stroke="#b5b5b5" stroke-width="1"/>
<path d="M124 648.2H130M127 645.2V651.2" stroke="#b5b5b5" stroke-width="1" fill="none"/>
</g>
<!-- scrollbars -->
<rect x="43" y="664" width="968" height="9" fill="#f1f1f1"/>
<rect x="53.5" y="664" width="79" height="9" fill="#c1c1c1"/>
<path d="M49.6 666.4L47 668.6L49.6 670.8Z" fill="#505050"/>
<path d="M992.2 666.4L994.8 668.6L992.2 670.8Z" fill="#505050"/>
<rect x="1000" y="98" width="11" height="566" fill="#f1f1f1"/>
<rect x="1000" y="109" width="9.5" height="27" fill="#c1c1c1"/>
<path d="M1002.2 105.5L1004.7 102.8L1007.2 105.5Z" fill="#505050"/>
<path d="M1002.2 656.5L1004.7 659.2L1007.2 656.5Z" fill="#505050"/>
<rect x="1000" y="664" width="11" height="9" fill="#dcdcdc"/>
</svg>
<!-- PANEL -->
<div id="panel" class="abs"></div>
<div class="abs" style="left:1011px;top:67px;width:189px;height:1px;background:#e9e9e9"></div>
<div class="abs" style="left:1011px;top:67px;width:1px;height:606px;background:#e3e3e3"></div>
<div class="t" style="left:1022.6px;top:77.2px;font-size:8.7px;font-weight:bold;color:#1a7f5a;letter-spacing:0.1px;margin-top:0.4px">Layers</div>
<div class="t" style="left:1069.4px;top:77.2px;font-size:9.4px;color:#5e5e5e">Color Sync</div>
<div class="abs" style="left:1012px;top:96px;width:188px;height:1px;background:#e6e6e6"></div>
<div class="abs" style="left:1012px;top:94.8px;width:47.4px;height:1.8px;background:#0e7450"></div>
<div class="abs" style="left:1012px;top:126.6px;width:188px;height:1px;background:#e9e9e9"></div>
<!-- selected row -->
<div class="abs" style="left:1014.6px;top:236.2px;width:172px;height:34.8px;background:#b3ead7;border-radius:2.5px"></div>
<!-- blank canvas strip -->
<div class="abs" style="left:1190px;top:127.6px;width:10px;height:484px;background:#f8f8f8"></div>
<div class="abs" style="left:1012px;top:611.6px;width:188px;height:32px;background:#f3f3f3"></div>
<div class="abs" style="left:1018.4px;top:616.6px;width:33.4px;height:23px;background:#fff;border:1px solid #b9b9b9;border-radius:1.5px"></div>
<div class="t" style="left:1058px;top:625.6px;font-size:6.2px;color:#444">Blank Canvas</div>
<svg class="abs" style="left:1011px;top:98px" width="189" height="575" viewBox="1011 98 189 575" fill="none" stroke-linecap="round" stroke-linejoin="round">
<!-- top icons -->
<g stroke="#dcdcdc" stroke-width="1"><rect x="1026.4" y="107.4" width="7.2" height="7.2" rx="1" transform="rotate(45 1030 111)"/><path d="M1025 106.6V105.4H1026.2M1033.8 105.4H1035V106.6M1035 115.4V116.6H1033.8M1026.2 116.6H1025V115.4"/></g>
<rect x="1050" y="106" width="7.4" height="7.4" rx="1.2" stroke="#2e2e2e" stroke-width="1.1"/><rect x="1053" y="109" width="7.6" height="7.6" rx="1.2" stroke="#2e2e2e" stroke-width="1.1" fill="#fff"/><path d="M1055 112.8H1058.6M1056.8 111V114.6" stroke="#2e2e2e" stroke-width="1"/>
<path d="M1074.6 108.2H1085.4M1077.8 108V106.4H1082.2V108M1075.8 108.4L1076.6 116.6H1083.4L1084.2 108.4" stroke="#2e2e2e" stroke-width="1.1"/><path d="M1078.6 110.6V114.2M1081.4 110.6V114.2" stroke="#2e2e2e" stroke-width="1"/>
<!-- list scrollbar arrows -->
<path d="M1192.4 135L1194.7 132.4L1197 135Z" fill="#555"/><path d="M1192.4 605.6L1194.7 608.2L1197 605.6Z" fill="#555"/>
<!-- chevrons -->
<path d="M1022.4 144.8L1024.8 147.2L1027.2 144.8" stroke="#2b2b2b" stroke-width="1.2"/>
<path d="M1022.4 324.2L1024.8 326.6L1027.2 324.2" stroke="#2b2b2b" stroke-width="1.2"/>
<!-- subtract icon -->
<rect x="1037.6" y="139.4" width="10.2" height="14.6" rx="0.8" stroke="#8a8a8a" stroke-width="0.9"/><path d="M1040 150.4V146.4L1039.6 143.8L1040.8 144.8H1042.4L1043.4 143.6V146.6H1045.2V142.6L1046.2 142.2M1045.2 146.6V150.4H1044.2V148H1042V150.4Z" stroke="#8a8a8a" stroke-width="0.6"/>
<!-- cat icon -->
<path d="M1058.6 187.6V181L1058 177.4L1059.8 178.8H1062L1063.6 177V181.4H1065V176.4L1066 175.6M1065 181.4V187.6H1063.4V184.2H1060.6V187.6Z" stroke="#c4c4c4" stroke-width="0.7"/>
<!-- square icon -->
<rect x="1057.2" y="210.4" width="10" height="14" stroke="#9a9a9a" stroke-width="0.9" fill="#fff"/>
<!-- iris thumb -->
<rect x="1035.4" y="246.4" width="13.8" height="13.4" fill="#f4f4f4"/><path d="M1036 258L1040.6 250.4L1044 254.6L1047.6 248.2M1037.4 248.4L1042 247.2M1043 258.6L1048.6 256.2M1036 253L1039 255.6" stroke="#dadada" stroke-width="0.8"/>
<!-- warning -->
<path d="M1172.3 249.2L1176.8 256.8H1167.8Z" fill="#f6b93b" stroke="#f6b93b" stroke-width="1.2"/><path d="M1172.3 251.8V254.2" stroke="#fff" stroke-width="1"/><circle cx="1172.3" cy="255.6" r="0.5" fill="#fff"/>
<!-- orange swatch -->
<rect x="1037.8" y="281.8" width="9.4" height="14.6" fill="#f7931e" stroke="#d97f14" stroke-width="0.6"/>
<!-- attach clip -->
<path d="M1040 328.6H1044.6C1046.2 328.6 1047 327.6 1047 326.4C1047 325.2 1046.2 324.2 1044.6 324.2H1039.4C1037.4 324.2 1036.4 325.4 1036.4 326.8C1036.4 328.6 1037.6 329.8 1039.4 329.8H1045.4" stroke="#2b2b2b" stroke-width="1" transform="translate(0 -1.4)"/>
<!-- line icon -->
<path d="M1062.7 353V368.4" stroke="#bdbdbd" stroke-width="0.8" stroke-dasharray="1.6 1.6"/>
<!-- square icon 2 -->
<rect x="1055.4" y="391.2" width="14.2" height="10.2" stroke="#9a9a9a" stroke-width="0.9" fill="#fff"/>
<!-- bottom action icons (disabled) -->
<g stroke="#d0d0d0" stroke-width="1">
<circle cx="1027.4" cy="651.2" r="3.6"/><rect x="1027.6" y="651.6" width="6.4" height="6" rx="0.8"/>
<rect x="1052" y="647.6" width="6" height="6" rx="0.8"/><circle cx="1058.6" cy="654.4" r="3.7"/>
<path d="M1090 650.4H1096.6C1098.4 650.4 1099.6 651.6 1099.6 653C1099.6 654.4 1098.4 655.6 1096.6 655.6H1090C1088.2 655.6 1087 654.4 1087 653C1087 651.6 1088.2 650.4 1090 650.4ZM1090 653H1096.4"/>
<path d="M1122.8 646.8V651M1120.8 649.2L1122.8 651.2L1124.8 649.2M1117.6 652.2L1122.8 654.8L1128 652.2M1117.6 655L1122.8 657.8L1128 655"/>
<circle cx="1155" cy="653" r="6" stroke-dasharray="2.4 2.2"/>
</g>
<path d="M1066.6 652.2H1069.8L1068.2 654.2Z" fill="#bdbdbd"/>
</svg>
<div class="t ln" style="left:1054.8px;top:136.4px">Subtract</div><div class="t ls" style="left:1054.8px;top:149.2px">Basic Cut</div>
<div class="t ln" style="left:1074.8px;top:178px">Cat</div>
<div class="t ln" style="left:1074.8px;top:213.4px">Square</div>
<div class="t ln" style="left:1054.6px;top:243px;font-weight:bold;color:#1f3b33;font-size:8.5px;letter-spacing:0.13px">square-iris-folding-cws</div><div class="t ls" style="left:1054.6px;top:255.4px;color:#5d7f75">Print Then Cut</div>
<div class="t ln" style="left:1054.8px;top:279.4px">Square</div><div class="t ls" style="left:1054.8px;top:292px">Basic Cut</div>
<div class="t ln" style="left:1054.8px;top:321.2px">Attach</div>
<div class="t ln" style="left:1074.8px;top:350.6px">Line</div><div class="t ls" style="left:1074.8px;top:363.2px">Score</div>
<div class="t ln" style="left:1074.8px;top:386.2px">Square</div><div class="t ls" style="left:1074.8px;top:398.6px">Basic Cut</div>
<div class="t bl" style="left:1029px;top:664px;transform:translateX(-50%)">Slice</div>
<div class="t bl" style="left:1060px;top:664px;transform:translateX(-50%)">Combine</div>
<div class="t bl" style="left:1093.3px;top:664px;transform:translateX(-50%)">Attach</div>
<div class="t bl" style="left:1122.8px;top:664px;transform:translateX(-50%)">Flatten</div>
<div class="t bl" style="left:1155px;top:664px;transform:translateX(-50%)">Contour</div>

<!-- WATERMARK LOGO -->
<svg class="abs" style="left:8px;top:586px" width="102" height="80" viewBox="8 586 102 80">
<ellipse cx="58.1" cy="625.5" rx="48.1" ry="37.5" fill="#c3381c"/>
<g fill="#fff" stroke="#fff" stroke-width="0.6" font-family="Liberation Serif, serif" font-style="italic">
<text x="21" y="623.4" font-size="30" textLength="52" lengthAdjust="spacingAndGlyphs">Craft</text>
<text x="38.5" y="646.8" font-size="29" textLength="48.5" lengthAdjust="spacingAndGlyphs">Sarah</text>
</g>
<text x="77.2" y="618.6" font-size="6.2" font-weight="bold" fill="#fff" font-family="Liberation Serif, serif" textLength="19.6" lengthAdjust="spacingAndGlyphs">WITH</text>
<g stroke="#fff" fill="none" stroke-linecap="round">
<path d="M78.6 623Q80.5 620.6 86 621.8T97.4 620.6" stroke-width="1.2"/>
<path d="M40 640C34 634 27 640 29.5 646C31.5 650.5 37.5 649 36 644.5" stroke-width="0.8"/>
<path d="M80.5 633C82 629.5 86 627.6 90 628.4C93.4 629.2 92.4 633 89.2 632" stroke-width="0.8"/>
<path d="M60.5 631.5C57.5 633.5 55 632 56 630" stroke-width="0.8"/>
</g>
</svg>

</div>
</body>
</html>
